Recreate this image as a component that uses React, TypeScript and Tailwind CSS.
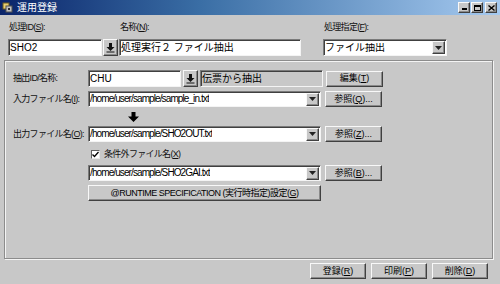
import type { ReactNode } from "react";

const font = "font-['Liberation_Sans','Noto_Sans_CJK_JP',sans-serif]";

// sunken text field edge (Windows classic look)
const sunken =
  "border border-t-[#7a7a7a] border-l-[#7a7a7a] border-r-[#f4f4f4] border-b-[#f4f4f4] shadow-[inset_1px_1px_0_#404040]";
const raised =
  "border border-t-[#f8f8f8] border-l-[#f8f8f8] border-r-[#404040] border-b-[#404040] shadow-[inset_-1px_-1px_0_#8a8a8a]";

function Field({
  value,
  className = "",
  gray = false,
  path = false,
}: {
  value: string;
  className?: string;
  gray?: boolean;
  path?: boolean;
}) {
  return (
    <div
      className={`${sunken} ${gray ? "bg-[#c8c8c8]" : "bg-white"} flex items-center pl-[1px] text-[10px] leading-none text-black whitespace-nowrap overflow-hidden ${path ? "tracking-[-0.9px]" : ""} ${className}`}
    >
      {value}
    </div>
  );
}

function DropArrow() {
  return (
    <div className={`${raised} w-[13px] h-[13px] bg-[#c8c8c8] flex items-center justify-center`}>
      <svg width="7" height="4" viewBox="0 0 7 4">
        <path d="M0 0h7L3.5 4z" fill="#222" />
      </svg>
    </div>
  );
}

function Combo({ value, className = "", path = false }: { value: string; className?: string; path?: boolean }) {
  return (
    <div className={`${sunken} bg-white flex items-center justify-between ${className}`}>
      <span
        className={`pl-[1px] text-[10px] leading-none whitespace-nowrap overflow-hidden ${path ? "tracking-[-0.9px]" : ""}`}
      >
        {value}
      </span>
      <DropArrow />
    </div>
  );
}

function Btn({ children, className = "" }: { children: ReactNode; className?: string }) {
  return (
    <div
      className={`${raised} bg-[#c8c8c8] flex items-center justify-center text-[9px] leading-none text-black whitespace-nowrap ${className}`}
    >
      {children}
    </div>
  );
}

function PickButton({ className = "" }: { className?: string }) {
  return (
    <Btn className={className}>
      <svg width="9" height="10" viewBox="0 0 9 10">
        <path d="M3 0h3v4h2.5L4.5 8 0.5 4H3z" fill="#111" />
        <path d="M0.5 9h8" stroke="#111" strokeWidth="1" />
      </svg>
    </Btn>
  );
}

function Label({ children, className = "" }: { children: ReactNode; className?: string }) {
  return (
    <div className={`text-[9px] leading-none whitespace-nowrap tracking-[-0.7px] text-[#111] ${className}`}>
      {children}
    </div>
  );
}

const u = (c: string) => <span className="underline">{c}</span>;

export default function App() {
  return (
    <div className={`${font} w-[500px] h-[284px] bg-[#c8c8c8] overflow-hidden flex flex-col text-black`}>
      {/* title bar */}
      <div className="h-[15px] flex items-center bg-[linear-gradient(to_right,#0a246a,#3a6ea5_40%,#a6caf0)] pl-[2px] pr-[3px]">
        <svg width="11" height="11" viewBox="0 0 11 11">
          <rect x="1" y="1" width="6" height="6" fill="#e8d070" stroke="#6a5a20" strokeWidth="1" />
          <rect x="4" y="4" width="6" height="6" fill="#c0c0c0" stroke="#505050" strokeWidth="1" />
          <rect x="6" y="6" width="2" height="2" fill="#303030" />
        </svg>
        <span className="ml-[4px] text-white text-[10px] leading-none">運用登録</span>
        <div className="ml-auto flex gap-[1px]">
          <div className={`${raised} w-[12px] h-[11px] bg-[#c8c8c8] flex items-end justify-center pb-[2px]`}>
            <div className="w-[5px] h-[2px] bg-black" />
          </div>
          <div className={`${raised} w-[12px] h-[11px] bg-[#c8c8c8] mr-[1px] flex items-center justify-center`}>
            <div className="w-[7px] h-[6px] border border-black border-t-2" />
          </div>
          <div className={`${raised} w-[12px] h-[11px] bg-[#c8c8c8] flex items-center justify-center`}>
            <svg width="7" height="6" viewBox="0 0 7 6">
              <path d="M0.5 0.5l6 5M6.5 0.5l-6 5" stroke="#000" strokeWidth="1.4" />
            </svg>
          </div>
        </div>
      </div>

      {/* header fields */}
      <div className="flex pl-[8px] pt-[8px]">
        <div className="w-[111px] flex flex-col">
          <Label className="h-[12px] pl-[1px]">処理ID({u("S")}):</Label>
          <div className="flex gap-[1px] mt-[4px]">
            <Field value="SHO2" className="w-[94px] h-[17px]" />
            <PickButton className="w-[15px] h-[17px]" />
          </div>
        </div>
        <div className="w-[182px] flex flex-col">
          <Label className="h-[12px] pl-[1px]">名称({u("N")}):</Label>
          <Field value="処理実行２ ファイル抽出" className="w-[182px] h-[17px] mt-[4px]" />
        </div>
        <div className="ml-[22px] w-[124px] flex flex-col">
          <Label className="h-[12px] pl-[1px]">処理指定({u("F")}):</Label>
          <Combo value="ファイル抽出" className="w-[124px] h-[17px] mt-[4px] pr-[1px]" />
        </div>
      </div>

      {/* group box */}
      <div className="mt-[4px] ml-[4px] w-[489px] h-[199px] border border-[#8c8c8c] shadow-[inset_1px_1px_0_#f4f4f4,1px_1px_0_#f4f4f4] pl-[8px] pt-[9px]">
        <div className="flex flex-col">
          <div className="flex items-center h-[17px]">
            <Label className="w-[75px]">抽出ID/名称:</Label>
            <Field value="CHU" className="w-[93px] h-[17px]" />
            <PickButton className="ml-[2px] w-[15px] h-[17px]" />
            <Field value="伝票から抽出" gray className="ml-[2px] w-[123px] h-[17px]" />
            <Btn className="ml-[3px] w-[57px] h-[16px]">編集({u("T")})</Btn>
          </div>

          <div className="flex items-center h-[16px] mt-[4px]">
            <Label className="w-[75px]">入力ファイル名({u("I")}):</Label>
            <Combo value="/home/user/sample/sample_in.txt" path className="w-[233px] h-[16px] pr-[1px]" />
            <Btn className="ml-[4px] w-[57px] h-[16px]">参照({u("Q")})...</Btn>
          </div>

          <div className="h-[19px] flex items-center pl-[115px]">
            <svg width="11" height="10" viewBox="0 0 11 10">
              <path d="M3.5 0h4v4.5H11L5.5 10 0 4.5h3.5z" fill="#000" />
            </svg>
          </div>

          <div className="flex items-center h-[16px]">
            <Label className="w-[75px]">出力ファイル名({u("O")}):</Label>
            <Combo value="/home/user/sample/SHO2OUT.txt" path className="w-[233px] h-[16px] pr-[1px]" />
            <Btn className="ml-[4px] w-[57px] h-[16px]">参照({u("Z")})...</Btn>
          </div>

          <div className="flex items-center h-[16px] mt-[4px] pl-[78px]">
            <div className="w-[9px] h-[9px] bg-white border border-t-[#606060] border-l-[#606060] border-r-[#e8e8e8] border-b-[#e8e8e8] flex items-center justify-center">
              <svg width="7" height="7" viewBox="0 0 7 7">
                <path d="M0.5 3.5l2 2 4-4.5" stroke="#000" strokeWidth="1.3" fill="none" />
              </svg>
            </div>
            <Label className="ml-[4px]">条件外ファイル名({u("X")})</Label>
          </div>

          <div className="flex items-center h-[16px] mt-[3px] pl-[75px]">
            <Combo value="/home/user/sample/SHO2GAI.txt" path className="w-[233px] h-[16px] pr-[1px]" />
            <Btn className="ml-[4px] w-[57px] h-[16px]">参照({u("B")})...</Btn>
          </div>

          <div className="flex mt-[4px] pl-[75px]">
            <Btn className="w-[233px] h-[16px]">
              <span className="tracking-[-0.5px]">@RUNTIME SPECIFICATION (実行時指定)設定({u("G")})</span>
            </Btn>
          </div>
        </div>
      </div>

      {/* footer buttons */}
      <div className="flex justify-end gap-[5px] pr-[12px] mt-[4px]">
        <Btn className="w-[56px] h-[16px]">登録({u("R")})</Btn>
        <Btn className="w-[56px] h-[16px]">印刷({u("P")})</Btn>
        <Btn className="w-[56px] h-[16px]">削除({u("D")})</Btn>
      </div>
    </div>
  );
}
